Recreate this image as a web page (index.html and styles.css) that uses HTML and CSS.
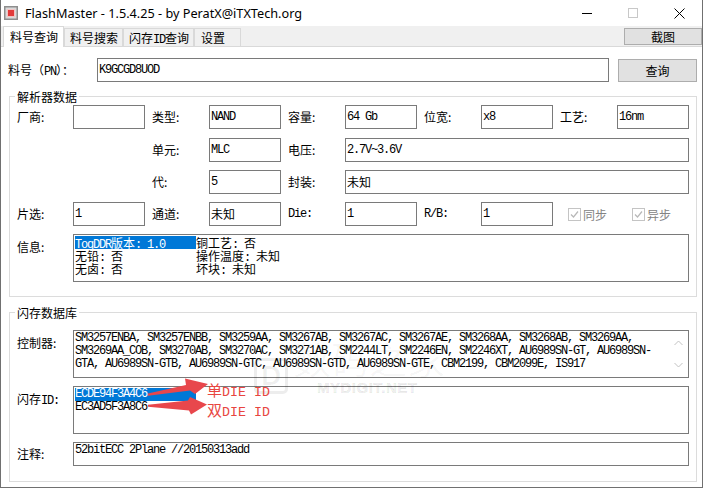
FILE: index.html
```html
<!DOCTYPE html>
<html lang="zh">
<head>
<meta charset="utf-8">
<title>FlashMaster</title>
<link rel="stylesheet" href="styles.css">
</head>
<body>
<div class="win">
  <div class="titlebar">
    <svg class="appicon" width="14" height="14" viewBox="0 0 14 14">
      <rect x="0" y="0" width="14" height="14" fill="#8e8e8e"/>
      <rect x="1.5" y="1.5" width="11" height="11" fill="#dadada"/>
      <rect x="3" y="3" width="8" height="8" fill="#f3c4c4"/>
      <rect x="4" y="4" width="6" height="6" fill="#e23b3b"/>
    </svg>
    <span class="title">FlashMaster - 1.5.4.25 - by PeratX@iTXTech.org</span>
    <div class="caps">
      <span class="cap"><svg width="10" height="10" viewBox="0 0 10 10"><line x1="0" y1="5.5" x2="10" y2="5.5" stroke="#000" stroke-width="1"/></svg></span>
      <span class="cap"><svg width="10" height="10" viewBox="0 0 10 10"><rect x="0.5" y="0.5" width="9" height="9" fill="none" stroke="#c8c8c8" stroke-width="1"/></svg></span>
      <span class="cap"><svg width="11" height="11" viewBox="0 0 11 11"><path d="M0.5 0.5 L10.5 10.5 M10.5 0.5 L0.5 10.5" stroke="#000" stroke-width="1"/></svg></span>
    </div>
  </div>

  <div class="tabbar">
    <div class="tab active">料号查询</div>
    <div class="tab">料号搜索</div>
    <div class="tab">闪存<span class="en">ID</span>查询</div>
    <div class="tab last">设置</div>
    <button class="btn shot">截图</button>
  </div>

  <div class="page">
    <div class="pnrow">
      <span class="pnlbl">料号（<span class="en">PN</span>）：</span>
      <div class="field pn en">K9GCGD8UOD</div>
      <button class="btn query">查询</button>
    </div>

    <fieldset class="group g1">
      <legend>解析器数据</legend>
      <div class="grid1">
        <span class="lbl">厂商:</span>
        <div class="field"></div>
        <span class="lbl pl">类型:</span>
        <div class="field en">NAND</div>
        <span class="lbl pl">容量:</span>
        <div class="field en">64 Gb</div>
        <span class="lbl pl">位宽:</span>
        <div class="field en">x8</div>
        <span class="lbl pl">工艺:</span>
        <div class="field en">16nm</div>

        <span class="lbl pl col3">单元:</span>
        <div class="field en">MLC</div>
        <span class="lbl pl">电压:</span>
        <div class="field en wide">2.7V~3.6V</div>

        <span class="lbl pl col3">代:</span>
        <div class="field en">5</div>
        <span class="lbl pl">封装:</span>
        <div class="field wide">未知</div>

        <span class="lbl">片选:</span>
        <div class="field en">1</div>
        <span class="lbl pl">通道:</span>
        <div class="field">未知</div>
        <span class="lbl pl en">Die:</span>
        <div class="field en">1</div>
        <span class="lbl pl en">R/B:</span>
        <div class="field en">1</div>
        <label class="chk"><span class="box"><svg width="11" height="11" viewBox="0 0 11 11"><path d="M2 5.5 L4.5 8 L9 2.5" fill="none" stroke="#b8b8b8" stroke-width="1.2"/></svg></span>同步</label>
        <label class="chk"><span class="box"><svg width="11" height="11" viewBox="0 0 11 11"><path d="M2 5.5 L4.5 8 L9 2.5" fill="none" stroke="#b8b8b8" stroke-width="1.2"/></svg></span>异步</label>

        <span class="lbl top">信息:</span>
        <div class="area full">
          <div class="ln"><span class="c1 sel"><span class="en">TogDDR</span>版本<span class="en">: 1.0</span></span><span class="c2">铜工艺<span class="en">: </span>否</span></div>
          <div class="ln"><span class="c1">无铅<span class="en">: </span>否</span><span class="c2">操作温度<span class="en">: </span>未知</span></div>
          <div class="ln"><span class="c1">无卤<span class="en">: </span>否</span><span class="c2">坏块<span class="en">: </span>未知</span></div>
        </div>
      </div>
    </fieldset>

    <fieldset class="group g2">
      <legend>闪存数据库</legend>
      <div class="grid2">
        <span class="lbl top">控制器:</span>
        <div class="area scroll">
          <div class="txt en">
            <div class="ln">SM3257ENBA, SM3257ENBB, SM3259AA, SM3267AB, SM3267AC, SM3267AE, SM3268AA, SM3268AB, SM3269AA,</div>
            <div class="ln">SM3269AA_COB, SM3270AB, SM3270AC, SM3271AB, SM2244LT, SM2246EN, SM2246XT, AU6989SN-GT, AU6989SN-</div>
            <div class="ln">GTA, AU6989SN-GTB, AU6989SN-GTC, AU6989SN-GTD, AU6989SN-GTE, CBM2199, CBM2099E, IS917</div>
          </div>
          <div class="sb">
            <svg width="9" height="6" viewBox="0 0 9 6"><path d="M0.5 5 L4.5 1 L8.5 5" fill="none" stroke="#c2c2c2" stroke-width="1"/></svg>
            <svg width="9" height="6" viewBox="0 0 9 6"><path d="M0.5 1 L4.5 5 L8.5 1" fill="none" stroke="#c2c2c2" stroke-width="1"/></svg>
          </div>
        </div>

        <span class="lbl top">闪存<span class="en">ID:</span></span>
        <div class="area">
          <div class="ln"><span class="c1 sel en">ECDE94F3A4C6</span></div>
          <div class="ln en">EC3AD5F3A8C6</div>
        </div>

        <span class="lbl">注释:</span>
        <div class="area short">
          <div class="ln en">52bitECC 2Plane //20150313add</div>
        </div>
      </div>
    </fieldset>
  </div>

  <div class="wm">
    <div class="wm-logo">D</div>
    <div class="wm-cn">数码之家</div>
    <div class="wm-en">MYDIGIT.NET</div>
  </div>

  <svg class="arrows" width="80" height="48" viewBox="0 0 80 48">
    <polygon points="8,21.5 46,13 45,6.5 68,12 55,22 50,18.5 8,23.8" fill="#e8474c"/>
    <polygon points="8,32.8 48,28.5 50,25 67,32.5 51,42.5 49,38.5 8,34.8" fill="#e8474c"/>
  </svg>
  <div class="annotext">
    <div>单<span class="en2">DIE ID</span></div>
    <div>双<span class="en2">DIE ID</span></div>
  </div>
</div>
</body>
</html>
```

FILE: styles.css
```css
* { box-sizing: border-box; }
html, body { margin: 0; padding: 0; background: #fff; }
body {
  font-family: "Noto Sans CJK SC", "Noto Sans", sans-serif;
  font-size: 12px;
  color: #000;
}
.en {
  font-family: "Liberation Mono", "Noto Sans CJK SC", monospace;
  font-size: 12px;
  letter-spacing: -1.2px;
}

.win {
  position: relative;
  width: 703px;
  height: 488px;
  border: 1px solid #707070;
  border-top: 0;
  background: #fff;
  display: flex;
  flex-direction: column;
  overflow: hidden;
}

/* title bar */
.titlebar {
  height: 26px;
  flex-shrink: 0;
  display: flex;
  align-items: center;
}
.appicon { margin-left: 3px; flex-shrink: 0; }
.title {
  margin-left: 7px;
  font-family: "Noto Sans", sans-serif;
  font-size: 12.7px;
  color: #000;
  white-space: nowrap;
}
.caps { margin-left: auto; display: flex; height: 100%; }
.cap {
  width: 46px;
  display: flex;
  align-items: center;
  justify-content: center;
}
.cap svg { display: block; }

/* tabs */
.tabbar {
  height: 21px;
  flex-shrink: 0;
  display: flex;
  align-items: flex-end;
  padding-left: 2px;
  background: #f0f0f0;
  border-bottom: 1px solid #d9d9d9;
}
.tab {
  height: 18px;
  padding: 0 4px 0 5px;
  border: 1px solid #d9d9d9;
  border-bottom: 0;
  background: #f0f0f0;
  line-height: 17px;
  white-space: nowrap;
}
.tab .en { font-size: 12px; }
.tab.active {
  height: 21px;
  margin-bottom: -1px;
  padding: 0 5px 0 6px;
  background: #fff;
  line-height: 19px;
}
.tab.last { min-width: 47px; padding-left: 6px; }

.btn {
  font-family: "Noto Sans CJK SC", sans-serif;
  font-size: 12px;
  background: #e1e1e1;
  border: 1px solid #adadad;
  color: #000;
  padding: 0;
  margin: 0;
}
.shot {
  margin-left: auto;
  margin-bottom: 1px;
  width: 78px;
  height: 17px;
  line-height: 15px;
}

/* page */
.page {
  padding: 11px 5px 0 8px;
  display: flex;
  flex-direction: column;
}
.pnrow {
  display: flex;
  align-items: center;
  height: 24px;
}
.pnlbl {
  width: 89px;
  margin-left: -1px;
  white-space: nowrap;
}
.field {
  height: 24px;
  border: 1px solid #7a7a7a;
  background: #fff;
  padding: 0 1px;
  line-height: 22px;
  white-space: nowrap;
  overflow: hidden;
}
.field.pn { width: 512px; }
.query {
  margin-left: 9px;
  width: 79px;
  height: 23px;
  line-height: 21px;
}

.group {
  margin: 8px 0 0;
  padding: 2px 7px 14px;
  border: 1px solid #dcdcdc;
  min-width: 0;
}
.group legend {
  padding: 0 2px;
  margin-left: -2px;
  line-height: 13px;
  font-size: 12px;
}
.g2 {
  margin-top: 9px;
  padding-top: 11px;
  padding-bottom: 15px;
}

.grid1 {
  display: grid;
  grid-template-columns: 56px 72px 64px 72px 64px 72px 64px 72px 64px 72px;
  grid-template-rows: 25px 24px 24px 24px 48px;
  row-gap: 8px;
  align-items: start;
}
.grid2 {
  display: grid;
  grid-template-columns: 56px 616px;
  grid-template-rows: 48px 48px 24px;
  row-gap: 8px;
  align-items: start;
}
.lbl {
  height: 24px;
  line-height: 24px;
  white-space: nowrap;
}
.lbl.pl { padding-left: 7px; }
.lbl.top { padding-top: 6px; line-height: 14px; height: auto; }
.col3 { grid-column: 3; }
.wide { grid-column: 6 / 11; }
.full { grid-column: 2 / 11; }

.chk {
  height: 24px;
  display: flex;
  align-items: center;
  padding-left: 15px;
  color: #838383;
  white-space: nowrap;
}
.chk .box {
  width: 13px;
  height: 13px;
  border: 1px solid #c4c4c4;
  background: #fff;
  margin-right: 2px;
  display: flex;
  align-items: center;
  justify-content: center;
}
.chk .box svg { display: block; }

.area {
  height: 48px;
  border: 1px solid #7a7a7a;
  background: #fff;
  padding: 1px;
  overflow: hidden;
}
.area.short { height: 24px; }
.ln {
  height: 13px;
  line-height: 13px;
  white-space: pre;
  display: flex;
}
.ln .en { line-height: 13px; }
.c1 {
  display: block;
  width: 121px;
  height: 13px;
  flex-shrink: 0;
}
.c2 { display: block; }
.sel { background: #0078d7; color: #fff; }

.area.scroll {
  display: flex;
}
.area.scroll .txt { flex: 1; min-width: 0; }
.sb {
  width: 17px;
  display: flex;
  flex-direction: column;
  justify-content: space-between;
  align-items: center;
  padding: 8px 0 8px;
}
.sb svg { display: block; }

/* watermark */
.wm {
  position: absolute;
  left: 250px;
  top: 336px;
  width: 200px;
  height: 60px;
  pointer-events: none;
}
.wm-logo {
  position: absolute;
  left: 3px;
  top: 22px;
  width: 34px;
  height: 36px;
  border: 3px solid rgba(0, 0, 0, 0.07);
  border-radius: 5px;
  font-family: "Liberation Sans", sans-serif;
  font-weight: bold;
  font-size: 28px;
  line-height: 30px;
  text-align: center;
  color: rgba(0, 0, 0, 0.06);
}
.wm-cn {
  position: absolute;
  left: 42px;
  top: 0;
  font-size: 38px;
  line-height: 44px;
  color: rgba(0, 0, 0, 0.035);
  white-space: nowrap;
}
.wm-en {
  position: absolute;
  left: 66px;
  top: 44px;
  font-family: "Liberation Sans", sans-serif;
  font-weight: bold;
  font-size: 15px;
  line-height: 15px;
  letter-spacing: 0.5px;
  color: rgba(0, 0, 0, 0.06);
  -webkit-text-stroke: 0.6px rgba(0, 0, 0, 0.1);
  white-space: nowrap;
}

/* annotations */
.arrows {
  position: absolute;
  left: 139px;
  top: 372px;
}
.annotext {
  position: absolute;
  left: 206px;
  top: 381px;
  color: #e8453f;
  font-size: 15px;
  line-height: 17px;
  white-space: nowrap;
}
.annotext .en2 {
  font-family: "Liberation Mono", monospace;
  font-size: 13.3px;
}
```
